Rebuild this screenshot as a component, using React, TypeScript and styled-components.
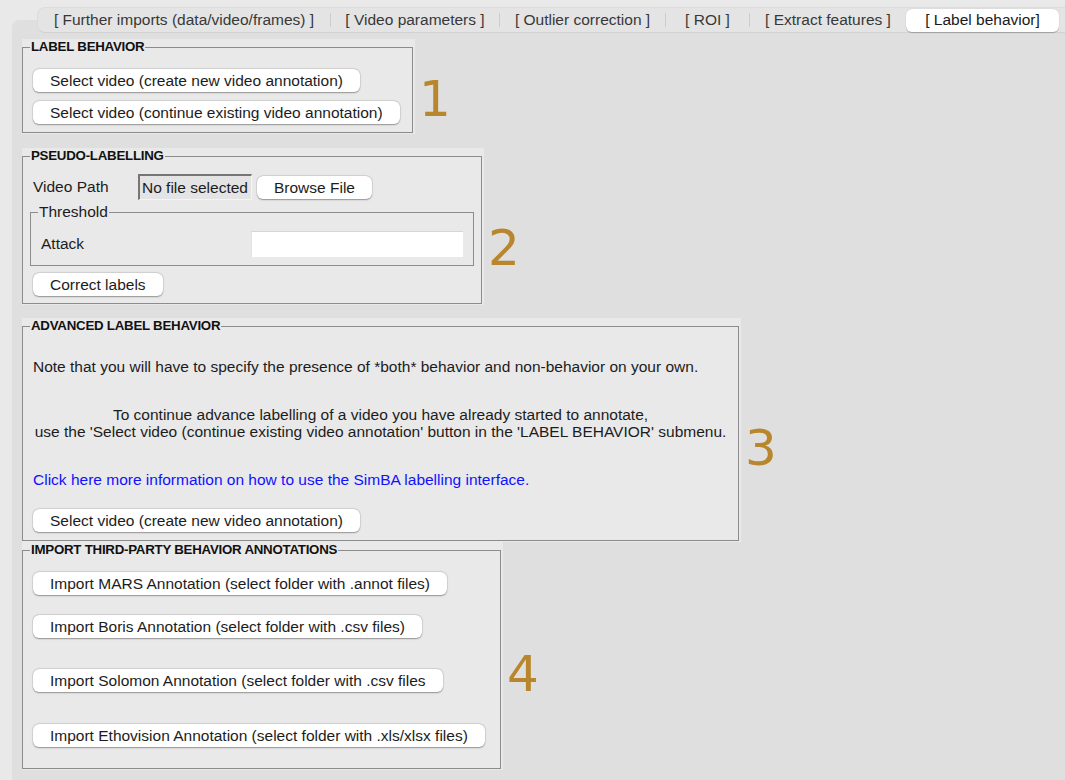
import React from 'react';
import styled, { createGlobalStyle } from 'styled-components';

const GlobalStyle = createGlobalStyle`
  html, body {
    margin: 0;
    padding: 0;
  }
  body {
    background: #e9e9e9;
    font-family: "Liberation Sans", Arial, Helvetica, sans-serif;
    font-size: 15.5px;
    color: #1c1c1c;
  }
`;

const Window = styled.div`
  width: 1065px;
  height: 780px;
  box-sizing: border-box;
  padding: 20px 0 0 12px;
  overflow: hidden;
  background: #e9e9e9;
`;

const Panel = styled.div`
  height: 100%;
  box-sizing: border-box;
  background: #dfdfdf;
  border-top-left-radius: 7px;
  padding-left: 10px;
  display: flex;
  flex-direction: column;
`;

const TabBar = styled.div`
  display: flex;
  align-items: center;
  height: 24px;
  margin: -12px 0 0 16px;
  background: #e4e4e4;
  border-radius: 7px 0 0 7px;
  box-shadow: 0 1px 0 #d2d2d2, 0 0 0 1px #dcdcdc;
`;

const Tab = styled.div<{ $w: number; $active?: boolean }>`
  width: ${(p) => p.$w}px;
  height: ${(p) => (p.$active ? '23px' : '24px')};
  display: flex;
  align-items: center;
  justify-content: center;
  flex-shrink: 0;
  font-size: 15.5px;
  color: ${(p) => (p.$active ? '#1a1a1a' : '#383838')};
  background: ${(p) => (p.$active ? '#ffffff' : 'transparent')};
  border-radius: 6px;
  box-shadow: ${(p) => (p.$active ? '0 0.5px 1px rgba(0,0,0,0.25)' : 'none')};
  white-space: pre;
`;

const TabSep = styled.div`
  width: 1px;
  height: 14px;
  background: #cdcdcd;
  flex-shrink: 0;
`;

const Content = styled.div`
  display: flex;
  flex-direction: column;
  padding-top: 7px;
`;

const Row = styled.div<{ $mt: number }>`
  display: flex;
  align-items: center;
  margin-top: ${(p) => p.$mt}px;
`;

const GroupBg = styled.div`
  background: #e9e9e9;
  padding: 0 2px 1px 0;
`;

const Group = styled.fieldset<{ $w: number; $pb: number }>`
  width: ${(p) => p.$w}px;
  box-sizing: border-box;
  min-width: 0;
  margin: 0;
  padding: 0 10px ${(p) => p.$pb}px 10px;
  border: 1px solid #8c8c8c;
  display: flex;
  flex-direction: column;
  align-items: flex-start;
`;

const Title = styled.legend`
  margin-left: -3px;
  padding: 0 1px;
  font-size: 13.3px;
  font-weight: 700;
  letter-spacing: -0.25px;
  line-height: 16px;
  color: #111;
`;

const SubGroup = styled.fieldset`
  align-self: stretch;
  min-width: 0;
  margin: 3px -3px 0 -3px;
  padding: 0 9px 8px 10px;
  border: 1px solid #8c8c8c;
  display: flex;
  flex-direction: column;
`;

const SubTitle = styled.legend`
  margin-left: -3px;
  padding: 0 1px;
  font-size: 15.5px;
  line-height: 18px;
  color: #1c1c1c;
`;

const Button = styled.button<{ $mt?: number }>`
  font-family: inherit;
  font-size: 15.5px;
  color: #1c1c1c;
  height: 23px;
  line-height: 23px;
  padding: 0 17px;
  margin-top: ${(p) => p.$mt ?? 0}px;
  background: #ffffff;
  border: none;
  border-radius: 6px;
  box-shadow: 0 0.5px 1.5px rgba(0, 0, 0, 0.35), 0 0 0 0.5px rgba(0, 0, 0, 0.08);
  white-space: nowrap;
  flex-shrink: 0;
`;

const FieldLabel = styled.span<{ $w: number }>`
  width: ${(p) => p.$w}px;
  flex-shrink: 0;
`;

const SunkenEntry = styled.div`
  width: 114px;
  height: 26px;
  box-sizing: border-box;
  padding-left: 2px;
  display: flex;
  align-items: center;
  background: #e4e4e4;
  border-top: 2px solid #767676;
  border-left: 2px solid #767676;
  border-right: 1px solid #f4f4f4;
  border-bottom: 1px solid #f4f4f4;
  white-space: nowrap;
  margin-right: 5px;
`;

const TextEntry = styled.div`
  width: 212px;
  height: 26px;
  box-sizing: border-box;
  background: #ffffff;
  border-top: 1px solid #d6d6d6;
  border-left: 1px solid #e2e2e2;
`;

const Para = styled.p<{ $mt: number; $center?: boolean; $link?: boolean }>`
  margin: ${(p) => p.$mt}px 0 0;
  align-self: stretch;
  line-height: 17px;
  text-align: ${(p) => (p.$center ? 'center' : 'left')};
  color: ${(p) => (p.$link ? '#1111ff' : '#1c1c1c')};
  cursor: ${(p) => (p.$link ? 'pointer' : 'default')};
`;

const Marker = styled.div<{ $dy: number }>`
  font-family: "DejaVu Sans", sans-serif;
  font-size: 50px;
  line-height: 50px;
  color: #b8862c;
  margin-left: 4px;
  padding-top: ${(p) => p.$dy * 2}px;
`;

const tabs = [
  { label: '[ Further imports (data/video/frames) ]', w: 292 },
  { label: '[ Video parameters ]', w: 168 },
  { label: '[ Outlier correction ]', w: 165 },
  { label: '[ ROI ]', w: 83 },
  { label: '[ Extract features ]', w: 156 },
];

const imports = [
  { text: 'Import MARS Annotation (select folder with .annot files)', mt: 14 },
  { text: 'Import Boris Annotation (select folder with .csv files)', mt: 20 },
  { text: 'Import Solomon Annotation (select folder with .csv files', mt: 31 },
  { text: 'Import Ethovision Annotation (select folder with .xls/xlsx files)', mt: 32 },
];

export default function App() {
  return (
    <>
      <GlobalStyle />
      <Window>
        <Panel>
          <TabBar>
            {tabs.map((t, i) => (
              <React.Fragment key={t.label}>
                <Tab $w={t.w}>{t.label}</Tab>
                {i < tabs.length - 1 && <TabSep />}
              </React.Fragment>
            ))}
            <Tab $w={153} $active>
              [ Label behavior]
            </Tab>
          </TabBar>

          <Content>
            <Row $mt={0}>
              <GroupBg>
                <Group $w={391} $pb={8}>
                  <Title>LABEL BEHAVIOR</Title>
                  <Button $mt={14}>Select video (create new video annotation)</Button>
                  <Button $mt={9}>Select video (continue existing video annotation)</Button>
                </Group>
              </GroupBg>
              <Marker $dy={12}>1</Marker>
            </Row>

            <Row $mt={14}>
              <GroupBg>
                <Group $w={460} $pb={7}>
                  <Title>PSEUDO-LABELLING</Title>
                  <Row $mt={10}>
                    <FieldLabel $w={105}>Video Path</FieldLabel>
                    <SunkenEntry>No file selected</SunkenEntry>
                    <Button>Browse File</Button>
                  </Row>
                  <SubGroup>
                    <SubTitle>Threshold</SubTitle>
                    <Row $mt={10}>
                      <FieldLabel $w={210}>Attack</FieldLabel>
                      <TextEntry />
                    </Row>
                  </SubGroup>
                  <Button $mt={7}>Correct labels</Button>
                </Group>
              </GroupBg>
              <Marker $dy={21}>2</Marker>
            </Row>

            <Row $mt={13}>
              <GroupBg>
                <Group $w={717} $pb={8}>
                  <Title>ADVANCED LABEL BEHAVIOR</Title>
                  <Para $mt={24}>
                    Note that you will have to specify the presence of *both* behavior and non-behavior on your own.
                  </Para>
                  <Para $mt={31} $center>
                    To continue advance labelling of a video you have already started to annotate,
                    <br />
                    use the 'Select video (continue existing video annotation' button in the 'LABEL BEHAVIOR' submenu.
                  </Para>
                  <Para $mt={31} $link>
                    Click here more information on how to use the SimBA labelling interface.
                  </Para>
                  <Button $mt={21}>Select video (create new video annotation)</Button>
                </Group>
              </GroupBg>
              <Marker $dy={18}>3</Marker>
            </Row>

            <Row $mt={0}>
              <GroupBg>
                <Group $w={479} $pb={21}>
                  <Title>IMPORT THIRD-PARTY BEHAVIOR ANNOTATIONS</Title>
                  {imports.map((b) => (
                    <Button key={b.text} $mt={b.mt}>
                      {b.text}
                    </Button>
                  ))}
                </Group>
              </GroupBg>
              <Marker $dy={18}>4</Marker>
            </Row>
          </Content>
        </Panel>
      </Window>
    </>
  );
}
